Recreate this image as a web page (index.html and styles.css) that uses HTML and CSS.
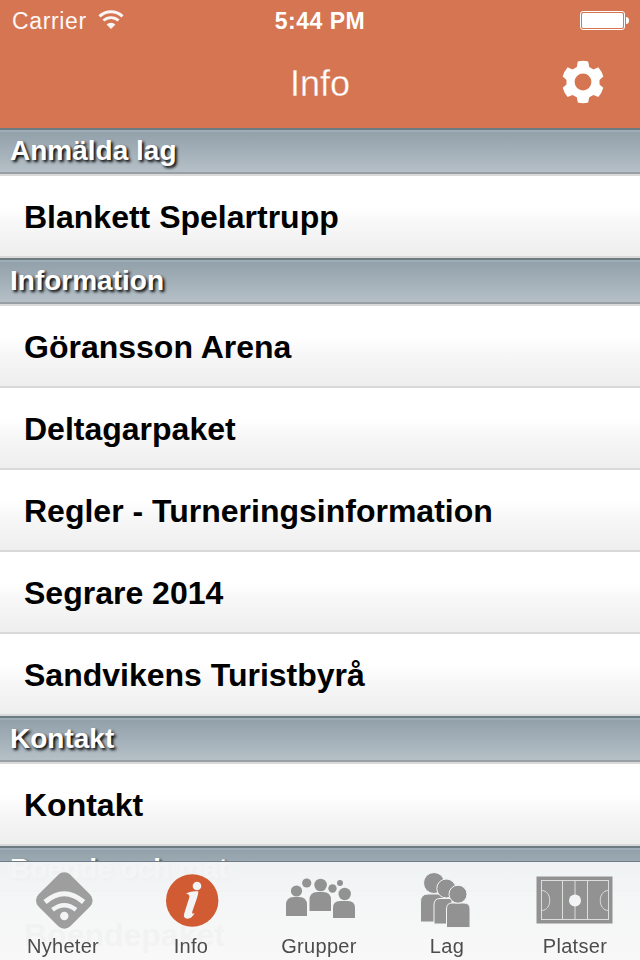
FILE: index.html
```html
<!DOCTYPE html>
<html lang="sv">
<head>
  <meta charset="UTF-8" />
  <title>Info</title>
  <link rel="stylesheet" href="styles.css">
</head>
<body>

  <div class="top">
    <div class="status">
      <div class="carrier">
        <span>Carrier</span>
        <svg class="wifi" width="26" height="20" viewBox="0 0 26 20">
          <path d="M1.5 6.4 A16.5 16.5 0 0 1 24.5 6.4" fill="none" stroke="#fff" stroke-width="3" />
          <path d="M5.4 10.6 A11 11 0 0 1 20.6 10.6" fill="none" stroke="#fff" stroke-width="2.8" />
          <path d="M8.6 14.4 A6.4 6.4 0 0 1 17.4 14.4 L13 19 Z" fill="#fff" />
        </svg>
      </div>
      <div class="time">5:44 PM</div>
      <div class="battery">
        <svg width="50" height="20" viewBox="0 0 50 20">
          <rect x=".5" y=".5" width="44" height="18" rx="2.5" fill="none" stroke="#fff" />
          <rect x="2" y="2" width="41" height="15" rx="1.5" fill="#fff" />
          <path d="M46 6 Q49 6 49 9.5 Q49 13 46 13 Z" fill="#fff" />
        </svg>
      </div>
    </div>
    <div class="navbar">
      <h1>Info</h1>
      <svg class="gear" width="42" height="44" viewBox="0 0 42 44">
        <path fill="#fff" fill-rule="evenodd" d="M15.8 1.5 Q21 0 26.2 1.5 L27.2 7 L31.5 9.4 L36.3 7.2 Q40 11.3 41.3 16.6 L37.5 20 V24.4 L41.3 27.8 Q40 32.8 36.3 37 L31.5 34.9 L27.2 37.3 L26.2 42.6 Q21 44 15.8 42.6 L14.8 37.3 L10.5 34.9 L5.7 37 Q2 32.8 .7 27.8 L4.5 24.4 V20 L.7 16.6 Q2 11.3 5.7 7.2 L10.5 9.4 L14.8 7 Z M21 13.6 A8.4 8.4 0 1 0 21 30.4 A8.4 8.4 0 1 0 21 13.6 Z" />
      </svg>
    </div>
  </div>

  <div class="list">
    <h2>Anmälda lag</h2>
    <div class="row">Blankett Spelartrupp</div>

    <h2>Information</h2>
    <div class="row">Göransson Arena</div>
    <div class="row">Deltagarpaket</div>
    <div class="row">Regler - Turneringsinformation</div>
    <div class="row">Segrare 2014</div>
    <div class="row">Sandvikens Turistbyrå</div>

    <h2>Kontakt</h2>
    <div class="row">Kontakt</div>

    <h2>Boende och mat</h2>
    <div class="row">Boendepaket</div>
  </div>

  <div class="tabbar">
    <div class="tab">
      <svg width="80" height="60" viewBox="0 0 80 60">
        <rect x="17.8" y="8" width="45" height="45" rx="8.5" transform="rotate(45 40.3 30.5)" fill="#9e9e9e" />
        <path d="M21 32 Q40.3 15.5 59.6 32" fill="none" stroke="#f3f4f5" stroke-width="5" />
        <path d="M28.5 39.8 Q40.3 30.5 52 39.8" fill="none" stroke="#f3f4f5" stroke-width="4.4" />
        <circle cx="40.3" cy="46" r="4.2" fill="#f3f4f5" />
      </svg>
      <span>Nyheter</span>
    </div>
    <div class="tab">
      <svg width="80" height="60" viewBox="0 0 80 60">
        <circle cx="40.2" cy="30.5" r="26.2" fill="#d15b32" />
        <circle cx="45" cy="16" r="4.3" fill="#f3f4f5" />
        <path d="M34 24 Q38 20.5 46.3 21.3 Q46.5 24 45 28 L40.3 41.5 Q39.5 45 42.6 43 Q40 48.6 35.5 48.8 Q30.8 48.3 32.3 43.2 L37.3 27.5 Q38.2 23.8 34 24 Z" fill="#f3f4f5" />
      </svg>
      <span>Info</span>
    </div>
    <div class="tab">
      <svg width="80" height="60" viewBox="0 0 80 60" fill="#929292">
        <circle cx="16.5" cy="21" r="5.6" />
        <circle cx="26.7" cy="13" r="4.6" />
        <circle cx="40.6" cy="15" r="6.3" />
        <circle cx="52.5" cy="18.5" r="4.2" />
        <circle cx="60" cy="13" r="3" />
        <circle cx="64.7" cy="24" r="6.2" />
        <path d="M6 46 V35 Q6 27 14 27 H19 Q27 27 27 35 V46 Z" />
        <path d="M29.5 41 V30 Q29.5 22 37.5 22 H43 Q51 22 51 30 V41 Z" />
        <path d="M53 48 V38 Q53 31 60 31 H68 Q75 31 75 38 V48 Z" />
      </svg>
      <span>Grupper</span>
    </div>
    <div class="tab">
      <svg width="80" height="60" viewBox="1 0 80 60" fill="#929292" stroke="#f3f4f5">
        <path d="M13.5 52 V32 Q13.5 24 21 24 H33 Q38 24 38 30 V52 Z" />
        <circle cx="27" cy="13" r="10.5" />
        <path d="M27 54 V35 Q27 28.5 33 28.5 H45 V54 Z" />
        <circle cx="39.3" cy="18.5" r="9.5" />
        <path d="M39.5 57.5 V39 Q39.5 33 45 33 H57 Q63 33 63 39 V57.5 Z" />
        <circle cx="51" cy="24.2" r="9" />
      </svg>
      <span>Lag</span>
    </div>
    <div class="tab">
      <svg width="80" height="60" viewBox="1 0 80 60">
        <rect x="1.5" y="6.5" width="76" height="47" fill="#929292" />
        <g fill="none" stroke="#dcdddd">
          <rect x="6.5" y="10.5" width="67" height="39" />
          <path d="M27.5 10.5 V49.5 M40 10.5 V49.5 M52.5 10.5 V49.5" />
          <path d="M6.5 20.5 C17.5 20.5 17.5 40.5 6.5 40.5 M73.5 20.5 C62.5 20.5 62.5 40.5 73.5 40.5" />
        </g>
        <circle cx="40" cy="30.5" r="6" fill="#f3f4f5" />
      </svg>
      <span>Platser</span>
    </div>
  </div>

</body>
</html>
```
FILE: styles.css
```css
body {
  margin: 0;
  height: 960px;
  overflow: hidden;
  font-family: "Liberation Sans", Arial, sans-serif;
  background: #fff;
}
.top {
  height: 128px;
  background: #d67551;
  color: #fff;
}
.status {
  display: flex;
  align-items: center;
  height: 42px;
  padding: 0 10px 0 12px;
}
.carrier, .battery {
  flex: 1;
  display: flex;
  align-items: center;
}
.carrier {
  font-size: 23px;
  letter-spacing: 0.65px;
  gap: 11px;
  opacity: 0.95;
}
.wifi {
  margin-top: -2px;
}
.battery {
  justify-content: flex-end;
}
.time {
  margin-right: 2px;
  font-size: 23px;
  font-weight: bold;
  letter-spacing: 0.5px;
}
.navbar {
  display: grid;
  grid-template-columns: 1fr auto 1fr;
  align-items: center;
  height: 84px;
  padding: 0 36px;
}
.navbar h1 {
  grid-column: 2;
  margin: 0;
  font-size: 36px;
  font-weight: normal;
  -webkit-text-stroke: 0.3px #d67551;
}
.gear {
  justify-self: end;
  margin-top: -4px;
}
.list h2 {
  box-sizing: border-box;
  height: 48px;
  margin: 0;
  padding-left: 10px;
  border-top: 2px solid #6c7a82;
  border-bottom: 2px solid #d9d9d9;
  box-shadow: inset 0 -2px #98a0a6, inset 0 2px #9dadb7;
  background: linear-gradient(#909fa9, #b7c1c8);
  color: #fff;
  font-size: 28px;
  line-height: 42px;
  text-shadow: 2px 2px 3px #000;
}
.row {
  box-sizing: border-box;
  height: 82px;
  padding-left: 24px;
  border-bottom: 2px solid #d9d9d9;
  background: linear-gradient(#fff 40%, #f7f7f7 60%, #eee);
  font-size: 32px;
  font-weight: bold;
  line-height: 82px;
}
.tabbar {
  position: fixed;
  left: 0;
  right: 0;
  bottom: 0;
  box-sizing: border-box;
  display: flex;
  height: 99px;
  padding-top: 8px;
  border-top: 1px solid #6f7b86;
  background: linear-gradient(rgba(242, 244, 245, 0.98), rgba(248, 248, 248, 0.98)) padding-box;
}
.tab {
  flex: 1;
  display: flex;
  flex-direction: column;
  align-items: center;
  color: #4c4c4c;
  font-size: 20px;
}
.tab span {
  margin-top: 5px;
  margin-left: -2px;
  letter-spacing: 0.3px;
}
```
